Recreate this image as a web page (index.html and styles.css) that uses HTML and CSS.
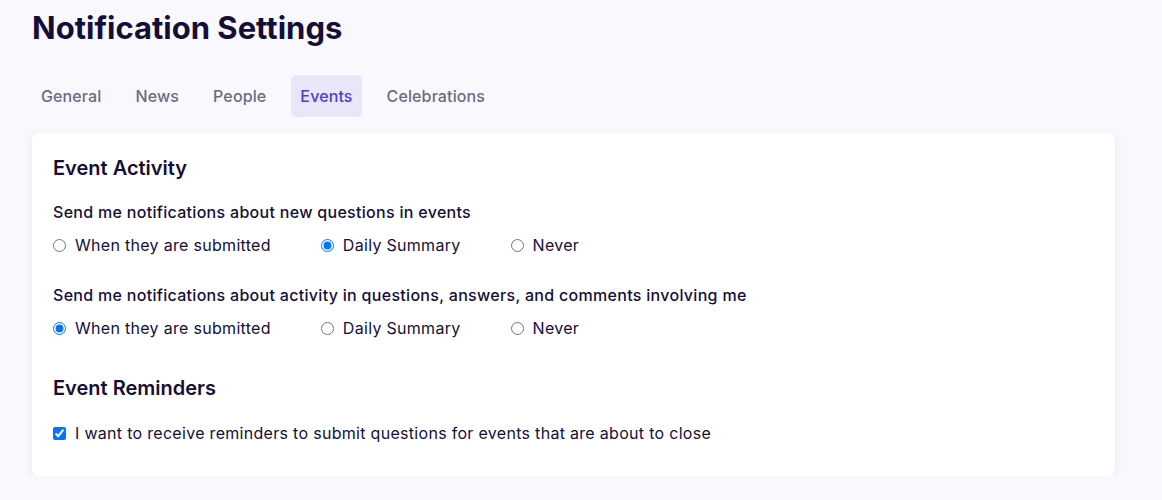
FILE: index.html
```html
<!DOCTYPE html>
<html>
<head>
    <title>Notification Settings</title>
    <link rel="stylesheet" href="styles.css">
</head>
<body>
    <div class="page">
        <h1>Notification Settings</h1>

        <nav class="tabs">
            <a class="tab" href="#">General</a>
            <a class="tab" href="#">News</a>
            <a class="tab" href="#">People</a>
            <a class="tab active" href="#">Events</a>
            <a class="tab" href="#">Celebrations</a>
        </nav>

        <div class="card">
            <h2>Event Activity</h2>

            <div class="setting">
                <p class="question">Send me notifications about new questions in events</p>
                <div class="options">
                    <label class="option"><input type="radio" name="new-questions"> When they are submitted</label>
                    <label class="option"><input type="radio" name="new-questions" checked> Daily Summary</label>
                    <label class="option"><input type="radio" name="new-questions"> Never</label>
                </div>
            </div>

            <div class="setting">
                <p class="question">Send me notifications about activity in questions, answers, and comments involving me</p>
                <div class="options">
                    <label class="option"><input type="radio" name="activity" checked> When they are submitted</label>
                    <label class="option"><input type="radio" name="activity"> Daily Summary</label>
                    <label class="option"><input type="radio" name="activity"> Never</label>
                </div>
            </div>

            <h2 class="section-title">Event Reminders</h2>

            <label class="option check">
                <input type="checkbox" checked> I want to receive reminders to submit questions for events that are about to close
            </label>
        </div>
    </div>
</body>
</html>
```

FILE: styles.css
```css
body {
    margin: 0;
    background: #f9f9fd;
    font-family: Inter, "Noto Sans", sans-serif;
    color: #150f38;
}

.page {
    width: 1083px;
    margin-left: 32px;
    padding-top: 10px;
}

h1 {
    margin: 0;
    font-size: 31px;
    line-height: 36px;
    font-weight: 700;
}

.tabs {
    display: flex;
    gap: 16px;
    margin-top: 29px;
}

.tab {
    padding: 9px 9px;
    font-size: 16px;
    line-height: 24px;
    font-weight: 500;
    letter-spacing: 0.12px;
    color: #6c6a83;
    text-decoration: none;
    border-radius: 5px;
}

.tab.active {
    background: #e8e6f8;
    color: #4a3fcf;
}

.card {
    margin-top: 16px;
    background: white;
    border-radius: 6px;
    box-shadow: 0 2px 10px rgba(20, 15, 60, 0.08);
    padding: 21px 21px 31px;
}

h2 {
    margin: 0 0 18px;
    font-size: 20px;
    line-height: 28px;
    font-weight: 600;
}

.section-title {
    margin-top: 34px;
    margin-bottom: 19px;
}

.setting {
    margin-bottom: 26px;
}

.question {
    margin: 0 0 9px;
    font-size: 16px;
    line-height: 24px;
    font-weight: 500;
    letter-spacing: 0.3px;
}

.options {
    display: flex;
    gap: 50px;
}

.option {
    display: flex;
    align-items: center;
    gap: 9px;
    font-size: 16px;
    line-height: 24px;
    letter-spacing: 0.3px;
}

.option input {
    margin: 0;
    width: 13px;
    height: 13px;
}
```
